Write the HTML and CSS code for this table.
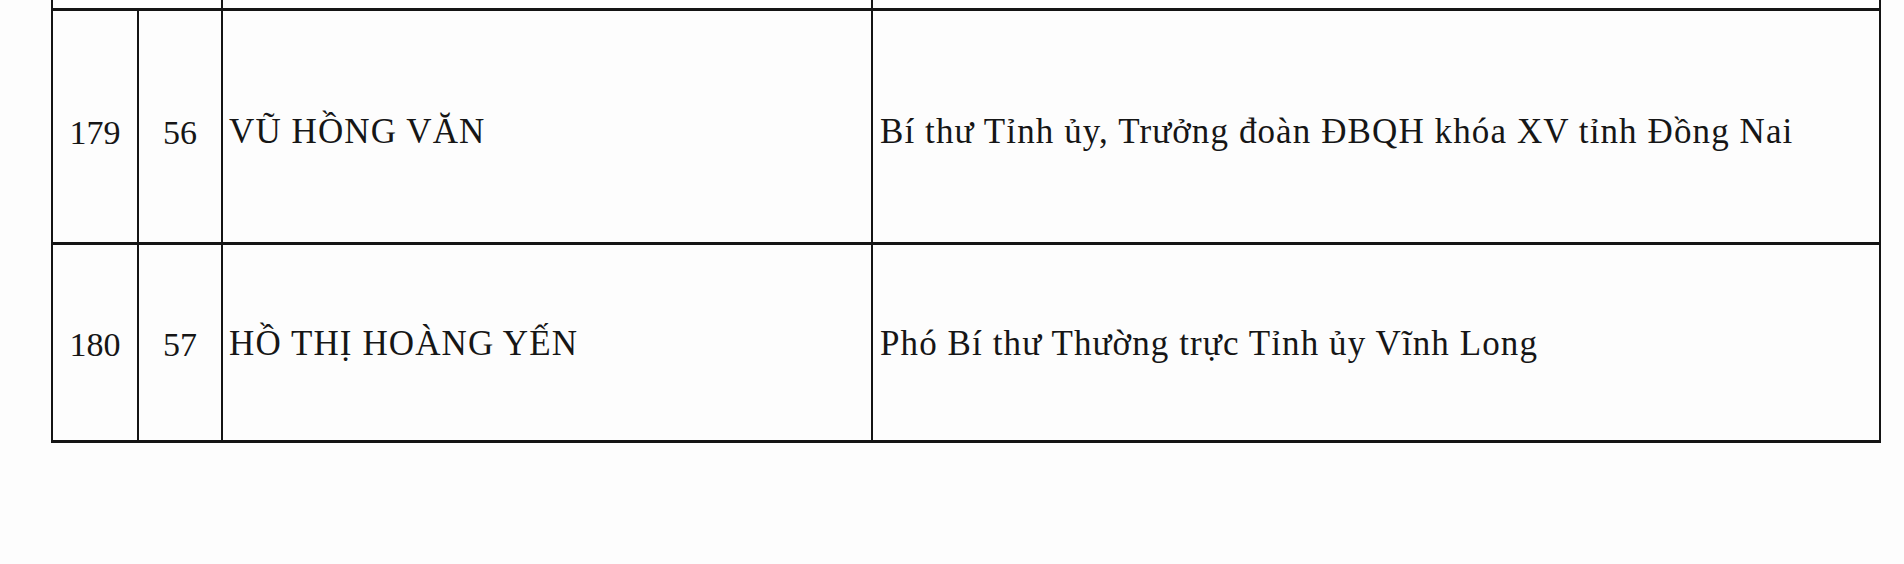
FILE: index.html
```html
<!DOCTYPE html>
<html lang="vi">
<head>
<meta charset="utf-8">
<link rel="stylesheet" href="styles.css">
</head>
<body>
<div class="page">
  <table class="list">
    <colgroup>
      <col class="c-stt">
      <col class="c-no">
      <col class="c-name">
      <col class="c-pos">
    </colgroup>
    <tr class="prev">
      <td colspan="2"></td>
      <td></td>
      <td></td>
    </tr>
    <tr class="r1">
      <td class="num">179</td>
      <td class="num">56</td>
      <td class="name">VŨ HỒNG VĂN</td>
      <td class="pos">Bí thư Tỉnh ủy, Trưởng đoàn ĐBQH khóa XV tỉnh Đồng Nai</td>
    </tr>
    <tr class="r2">
      <td class="num">180</td>
      <td class="num">57</td>
      <td class="name">HỒ THỊ HOÀNG YẾN</td>
      <td class="pos">Phó Bí thư Thường trực Tỉnh ủy Vĩnh Long</td>
    </tr>
  </table>
</div>
</body>
</html>
```
FILE: styles.css
```css
html, body {
  margin: 0;
  padding: 0;
  background: #fdfdfd;
}
.page {
  padding-left: 51px;
  font-family: "Liberation Serif", "Times New Roman", serif;
  color: #161616;
}
.list {
  border-collapse: collapse;
  table-layout: fixed;
  width: 1828px;
}
.c-stt { width: 86px; }
.c-no { width: 84px; }
.c-name { width: 650px; }
.c-pos { width: 1008px; }
.list td {
  border-left: 2px solid #141414;
  border-right: 2px solid #141414;
  border-top: 3px solid #141414;
  border-bottom: 3px solid #141414;
  padding: 0;
  vertical-align: middle;
  font-size: 34px;
  line-height: 1.15;
}
.prev td {
  border-top: none;
  height: 8px;
}
.r1 td {
  height: 219px;
  padding-top: 12px;
}
.r2 td {
  height: 191px;
  padding-top: 4px;
}
.num {
  text-align: center;
}
.list .name {
  padding-left: 6px;
  font-size: 35px;
  letter-spacing: 1.1px;
}
.list .pos {
  padding-left: 7px;
  font-size: 35px;
  letter-spacing: 1.1px;
}
```
